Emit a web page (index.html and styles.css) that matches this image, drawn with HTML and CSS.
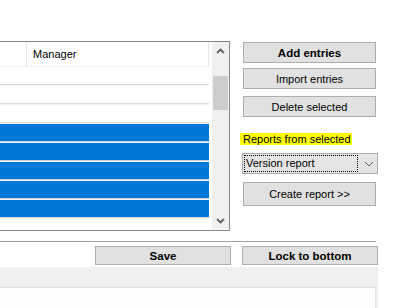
FILE: index.html
```html
<!DOCTYPE html>
<html>
<head>
<meta charset="utf-8">
<link rel="stylesheet" href="styles.css">
</head>
<body>
<div class="page">
  <div class="top">
    <div class="list">
      <div class="list-body">
        <div class="list-content">
          <div class="header">
            <div class="col c1"></div>
            <div class="col c2">Manager</div>
          </div>
          <div class="row"></div>
          <div class="row"></div>
          <div class="row"></div>
          <div class="row sel"></div>
          <div class="row sel"></div>
          <div class="row sel"></div>
          <div class="row sel"></div>
          <div class="row sel"></div>
        </div>
        <div class="scrollbar">
          <div class="arrow">
            <svg width="9" height="6" viewBox="0 0 9 6"><polyline points="1,5 4.5,1.5 8,5" fill="none" stroke="#606060" stroke-width="1.8"/></svg>
          </div>
          <div class="track"><div class="thumb"></div></div>
          <div class="arrow">
            <svg width="9" height="6" viewBox="0 0 9 6"><polyline points="1,1 4.5,4.5 8,1" fill="none" stroke="#606060" stroke-width="1.8"/></svg>
          </div>
        </div>
      </div>
    </div>
    <div class="side">
      <div class="btn bold">Add entries</div>
      <div class="btn import">Import entries</div>
      <div class="btn delete">Delete selected</div>
      <div class="label"><span class="hl">Reports from selected</span></div>
      <div class="combo">
        <div class="focus">Version report</div>
        <div class="drop">
          <svg width="10" height="6" viewBox="0 0 10 6"><polyline points="1,1 5,5 9,1" fill="none" stroke="#606060" stroke-width="1"/></svg>
        </div>
      </div>
      <div class="btn create">Create report &gt;&gt;</div>
    </div>
  </div>
  <div class="sep"></div>
  <div class="actions">
    <div class="btn wide bold">Save</div>
    <div class="btn wide bold">Lock to bottom</div>
  </div>
  <div class="panel">
    <div class="textbox"></div>
  </div>
</div>
</body>
</html>
```
FILE: styles.css
```css
body {
  margin: 0;
  background: #ffffff;
  font-family: "Liberation Sans", Arial, sans-serif;
  font-size: 11px;
  color: #000;
}
.page {
  width: 401px;
  height: 308px;
  overflow: hidden;
}
.top {
  display: flex;
  padding-top: 41px;
  height: 190px;
}
.list {
  width: 229px;
  height: 187px;
  padding-bottom: 1px;
  border: 1px solid #828790;
  border-left: none;
  background: #fff;
}
.list-body {
  display: flex;
  height: 187px;
}
.list-content {
  width: 212px;
}
.header {
  display: flex;
  height: 24px;
}
.col {
  height: 24px;
  border-right: 1px solid #e5e5e5;
}
.c1 { width: 26px; }
.c2 {
  width: 175px;
  padding-left: 6px;
  line-height: 24px;
}
.row {
  width: 209px;
  height: 17px;
  border-top: 1px solid #f2f2f2;
  border-bottom: 1px solid #dadada;
}
.row.sel {
  background: #0078d7;
  border-top-color: #f0f0f0;
  border-bottom-color: #d0d0d0;
}
.scrollbar {
  width: 17px;
  background: #f0f0f0;
  display: flex;
  flex-direction: column;
}
.arrow {
  height: 17px;
  display: flex;
  align-items: center;
  justify-content: center;
}
.track {
  flex: 1;
  padding-top: 17px;
}
.thumb {
  width: 15px;
  margin-left: 1px;
  height: 34px;
  background: #cdcdcd;
}
.side {
  margin-left: 13px;
  width: 133px;
  padding-top: 1px;
}
.btn {
  box-sizing: border-box;
  height: 21px;
  border: 1px solid #adadad;
  background: #e1e1e1;
  display: flex;
  align-items: center;
  justify-content: center;
}
.bold {
  font-weight: bold;
  font-size: 11.5px;
}
.import { margin-top: 5px; }
.delete { margin-top: 7px; }
.label {
  margin-top: 16px;
  height: 12px;
  line-height: 12px;
}
.hl {
  display: inline-block;
  background: #ffff00;
  margin-left: -3px;
  padding: 0 1px 0 3px;
}
.combo {
  box-sizing: border-box;
  margin-top: 8px;
  margin-left: -1px;
  width: 136px;
  height: 21px;
  border: 1px solid #adadad;
  background: #e5e5e5;
  display: flex;
  align-items: center;
  padding-left: 1px;
}
.focus {
  box-sizing: border-box;
  width: 114px;
  height: 17px;
  border: 1px dotted #000;
  line-height: 15px;
  padding-left: 1px;
}
.drop {
  flex: 1;
  display: flex;
  justify-content: center;
  padding-left: 2px;
}
.create {
  margin-top: 8px;
  height: 24px;
}
.sep {
  margin-top: 10px;
  width: 376px;
  height: 1px;
  background: #a0a0a0;
}
.actions {
  display: flex;
  gap: 11px;
  margin-top: 4px;
  padding-left: 95px;
}
.btn.wide {
  width: 136px;
  height: 19px;
}
.panel {
  margin-top: 2px;
  width: 378px;
  height: 41px;
  background: #f0f0f0;
  padding-top: 20px;
  box-sizing: border-box;
}
.textbox {
  width: 375px;
  height: 21px;
  background: #fdfdfd;
  border-top: 1px solid #e3e3e3;
  border-right: 1px solid #e3e3e3;
}
```
